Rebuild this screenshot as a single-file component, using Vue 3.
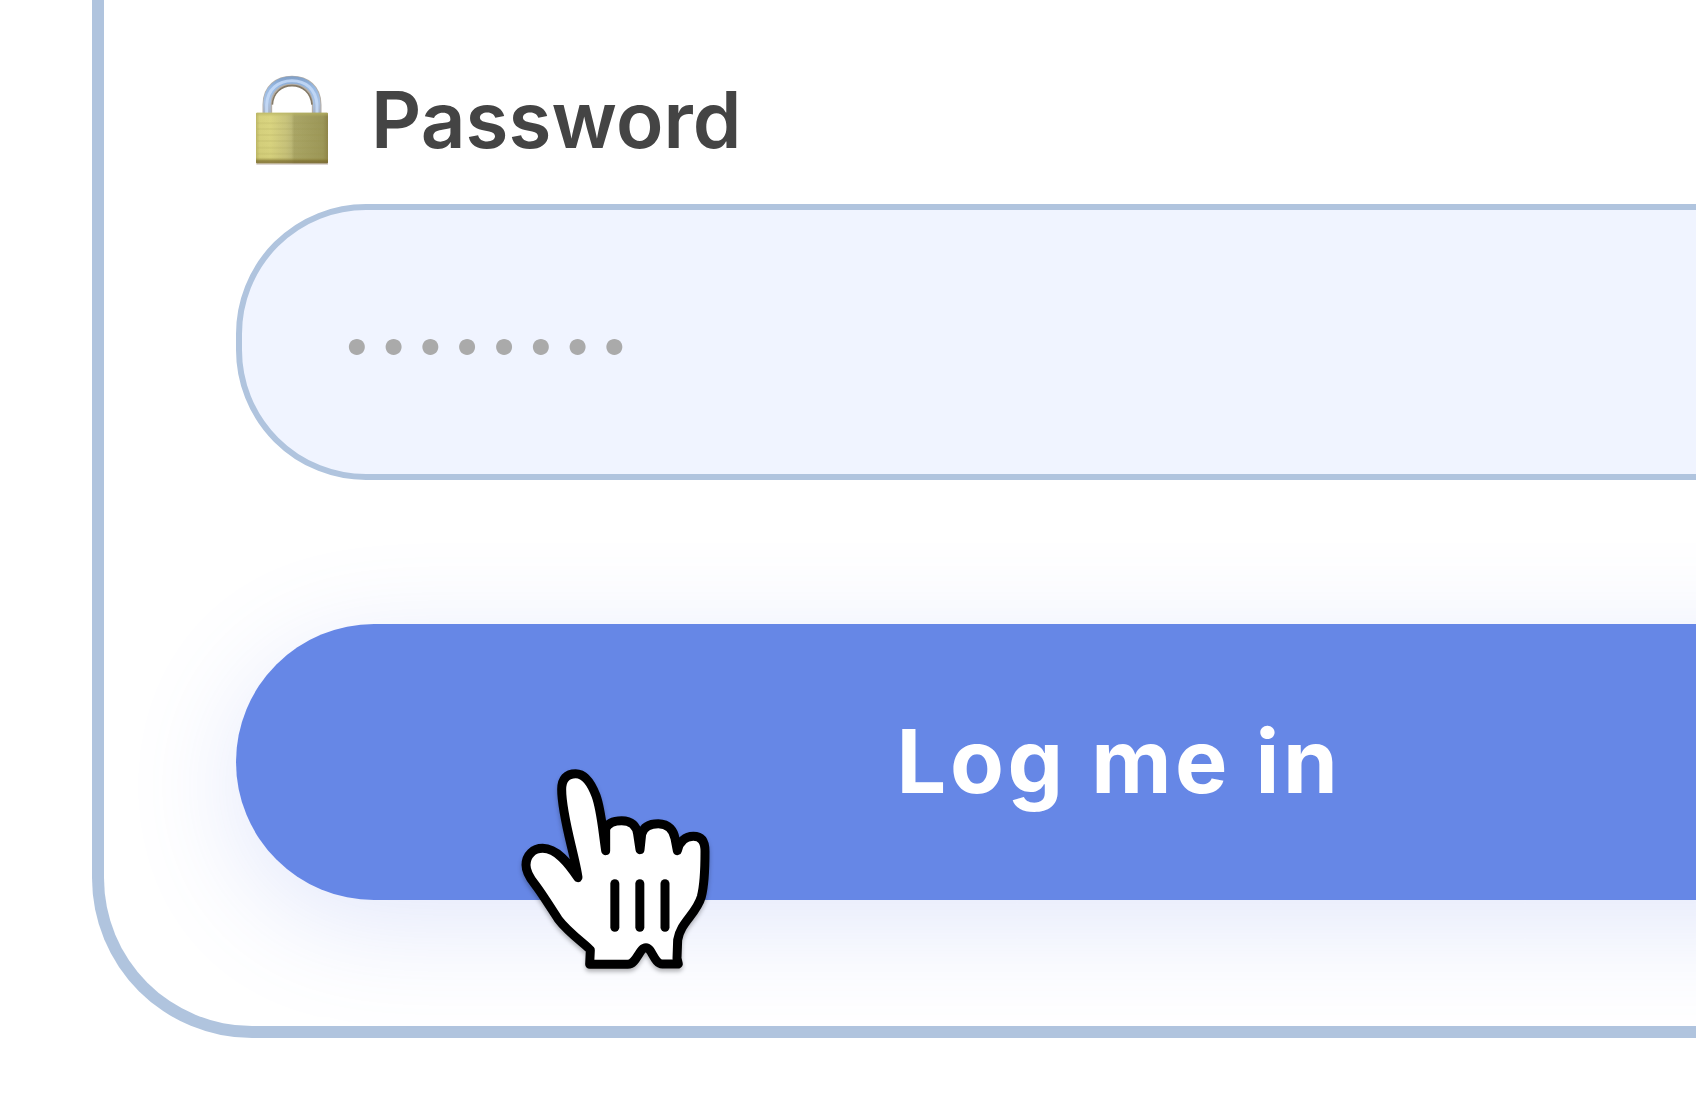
<script setup>
const gripLines = [344.5, 419.5, 495]
const placeholder = '•'.repeat(8)
</script>

<template>
  <main class="page">
    <section class="card">
      <label class="label">
        <svg class="lock" viewBox="0 0 330 360" aria-hidden="true">
          <defs>
            <linearGradient id="brass" x1="0" x2="1" y1="0" y2="0">
              <stop offset="0" stop-color="#bdb766" />
              <stop offset="0.05" stop-color="#d6d17d" />
              <stop offset="0.2" stop-color="#dad581" />
              <stop offset="0.42" stop-color="#c8c37c" />
              <stop offset="0.49" stop-color="#bdb978" />
              <stop offset="0.53" stop-color="#a9a566" />
              <stop offset="0.93" stop-color="#9b9658" />
              <stop offset="1" stop-color="#8d8348" />
            </linearGradient>
            <linearGradient id="shade" x1="0" x2="0" y1="0" y2="1">
              <stop offset="0" stop-color="#b8b463" stop-opacity="0.8" />
              <stop offset="0.08" stop-color="#b8b463" stop-opacity="0" />
              <stop offset="0.88" stop-color="#a49a4a" stop-opacity="0.1" />
              <stop offset="0.95" stop-color="#7b6d2c" stop-opacity="0.75" />
              <stop offset="1" stop-color="#766334" stop-opacity="0.75" />
            </linearGradient>
            <linearGradient id="steel" gradientUnits="userSpaceOnUse" x1="0" x2="0" y1="45" y2="160">
              <stop offset="0" stop-color="#7d9bc2" />
              <stop offset="0.3" stop-color="#96b8e2" />
              <stop offset="0.7" stop-color="#a9c2e4" />
              <stop offset="1" stop-color="#a8b2c4" />
            </linearGradient>
          </defs>
          <path d="M82 162V134C82 86 115 62 156 62S230 86 230 134V162" fill="none" stroke="#b5b0aa" stroke-width="29" />
          <path d="M81 162V133C81 85 115 60 156 60S230 85 230 133V162" fill="none" stroke="url(#steel)" stroke-width="22" />
          <path d="M80 162V134C82 87 115 62 156 62S228 87 231 134V162" fill="none" stroke="#c6dbf8" stroke-width="9" opacity="0.85" />
          <path d="M97 134C99 98 124 77 156 77S213 98 216 134" fill="none" stroke="#857a67" stroke-width="5" />
          <rect x="49" y="306" width="215" height="8" fill="#b7a9a0" opacity="0.7" />
          <rect x="48" y="158" width="216" height="152" rx="3" fill="url(#brass)" />
          <path d="M52 190H260M52 207H260M52 225H260M52 243H260M52 263H260M52 281H260" stroke="#969047" stroke-width="6" opacity="0.1" />
          <rect x="48" y="158" width="216" height="152" rx="3" fill="url(#shade)" />
        </svg>
        <span class="label-text">Password</span>
      </label>

      <div class="field"><span class="dots">{{ placeholder }}</span></div>

      <button class="submit" type="button">Log me in</button>
    </section>

    <svg class="pointer" viewBox="0 0 690 720" aria-hidden="true">
      <path
        class="hand"
        d="M234 383C225 315 185 200 185 118C185 86 200 71 227 71C252 71 273 97 288 137C303 178 306 225 317 302V236C324 218 343 212 365 212C395 212 410 228 413 252L420 299L425 252C431 229 450 221 475 221C508 221 521 244 525 265L532 302C538 275 556 259 580 259C605 259 615 276 615 304C615 350 614 402 604 440C589 492 541 517 533 570L531 625L535 642H487C462 642 456 593 438 593C417 593 411 642 383 643H269L271 600C262 588 205 548 175 508C145 462 122 425 104 402C88 382 78 366 78 345C78 315 100 295 128 295C170 295 205 340 234 383Z"
      />
      <path v-for="x in gripLines" :key="x" class="grip" :d="`M${x} 401V532`" />
    </svg>
  </main>
</template>

<style>
body {
  margin: 0;
  background: #fff;
}
</style>

<style scoped>
.page {
  position: relative;
  box-sizing: border-box;
  width: 100%;
  height: 1120px;
  padding-left: 92px;
  overflow: hidden;
  background: #fff;
  font-family: Inter, "Liberation Sans", sans-serif;
}

.card {
  box-sizing: border-box;
  display: flex;
  flex-direction: column;
  width: 2052px;
  height: 1038px;
  padding: 60px 132px 0;
  border: 12px solid #b0c4de;
  border-top: 0;
  border-radius: 0 0 160px 160px;
}

.label {
  display: flex;
  height: 120px;
  padding-left: 4px;
  margin-bottom: 24px;
}

.lock {
  flex: none;
  width: 110px;
  height: 120px;
}

.label-text {
  margin-left: 21px;
  color: #444;
  font-size: 78px;
  font-weight: 600;
  line-height: 120px;
  letter-spacing: 0.1px;
}

.field {
  box-sizing: border-box;
  display: flex;
  align-items: center;
  height: 276px;
  margin-bottom: 144px;
  padding: 3px 0 0 100.5px;
  border: 6px solid #b0c4de;
  border-radius: 130px;
  background: #f0f4ff;
}

.dots {
  color: #aaa;
  font-size: 51px;
  line-height: 1;
  letter-spacing: 8.1px;
}

.submit {
  flex: none;
  height: 276px;
  padding: 0 0 2px 2px;
  border: 0;
  border-radius: 138px;
  background: #6687e6;
  box-shadow: 0 24px 108px rgba(102, 126, 234, 0.19);
  color: #fff;
  font-family: inherit;
  font-size: 88px;
  font-weight: 700;
  letter-spacing: 3.6px;
}

.pointer {
  position: absolute;
  top: 750px;
  left: 500px;
  width: 230px;
  height: 240px;
  filter: drop-shadow(0 3px 2px rgba(0, 0, 0, 0.28));
}

.hand {
  fill: #fff;
  stroke: #000;
  stroke-width: 27;
  stroke-linejoin: round;
}

.grip {
  stroke: #000;
  stroke-width: 27;
  stroke-linecap: round;
}
</style>
